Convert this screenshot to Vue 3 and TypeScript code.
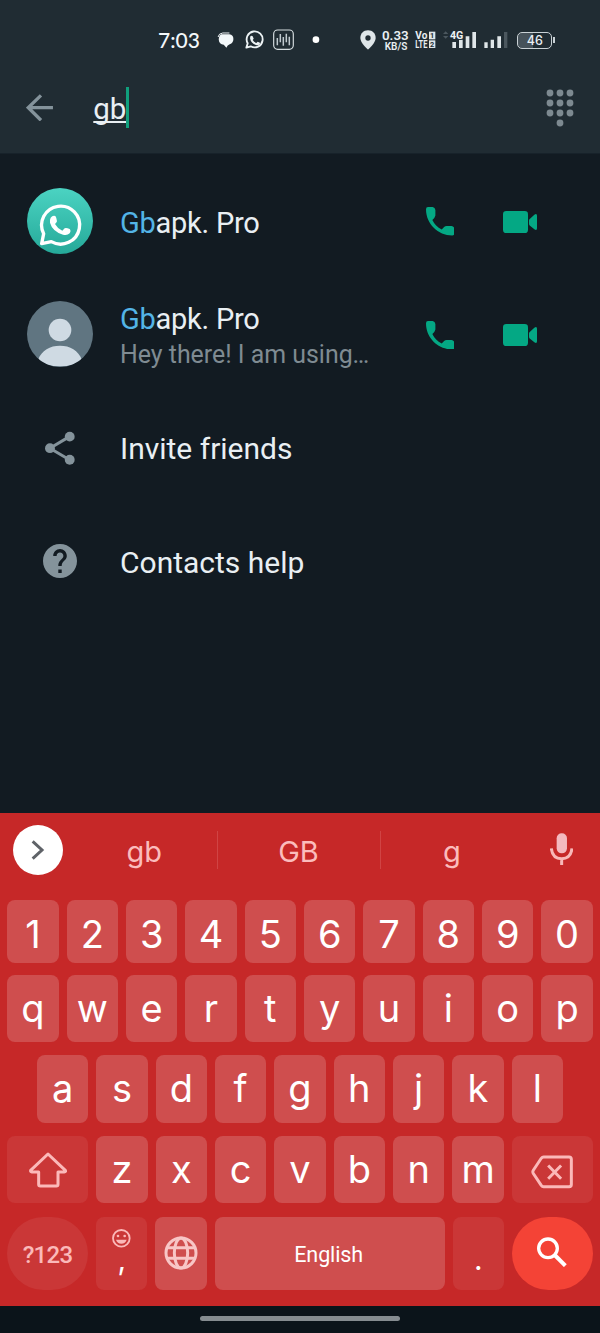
<script setup lang="ts">
interface Contact {
  match: string
  rest: string
  about?: string
  photo: boolean
}

const contacts: Contact[] = [
  { match: 'Gb', rest: 'apk. Pro', photo: true },
  { match: 'Gb', rest: 'apk. Pro', about: 'Hey there! I am using…', photo: false },
]
const digits: string[] = [...'1234567890']
const topRow: string[] = [...'qwertyuiop']
const homeRow: string[] = [...'asdfghjkl']
const bottomRow: string[] = [...'zxcvbnm']
const dialDots: [number, number][] = [
  [4, 4], [14, 4], [24, 4],
  [4, 14], [14, 14], [24, 14],
  [4, 24], [14, 24], [24, 24],
  [14, 34],
]
</script>

<template>
  <div class="screen">
    <header class="top">
      <div class="status">
        <span class="clock">7:03</span>
        <svg class="notices" viewBox="195 25 320 70">
          <path d="M214 44H238Q250 46 250 58Q250 70 239 74Q232 76 229 84L221 75Q207 73 206 60Q206 48 214 44Z" fill="#f3f8fa" />
          <path d="M204 52Q206 41 218 40H238" stroke="#f3f8fa" stroke-width="3" fill="none" />
          <path d="M289 84L293 71A24 24 0 1 1 302 80Z" fill="none" stroke="#edf3f5" stroke-width="5.5" stroke-linejoin="round" />
          <path d="M301 50Q304 46 308 50L311 57L308 61Q312 68 319 70L323 66L331 70Q329 78 320 77Q303 73 300 56Z" fill="#edf3f5" />
          <rect x="371" y="31" width="59" height="58" rx="12" fill="none" stroke="#d5dde0" stroke-width="3.500" />
          <path d="M382 55V77M391 43V68M400 52V78M409 42V68M418 51V77" stroke="#c0cacf" stroke-width="4.500" />
          <circle cx="498" cy="60" r="10" fill="#fff" />
        </svg>
        <svg class="pin" viewBox="0 0 48 60">
          <path d="M24 1C10 1 1 11 1 24C1 39 24 59 24 59S47 39 47 24C47 11 38 1 24 1Z" fill="#dfe6e9" />
          <circle cx="24" cy="24" r="8" fill="#212d34" />
        </svg>
        <svg class="rate" viewBox="98 15 162 90">
          <g fill="#e9eff2" font-weight="700">
            <text x="98" y="60" font-size="38" font-weight="600" textLength="80" lengthAdjust="spacingAndGlyphs">0.33</text>
            <text x="106" y="91" font-size="31" font-weight="600" textLength="68" lengthAdjust="spacingAndGlyphs">KB/S</text>
            <text x="198" y="58" font-size="30" textLength="36" lengthAdjust="spacingAndGlyphs">Vo</text>
            <text x="198" y="84" font-size="30" textLength="36" lengthAdjust="spacingAndGlyphs">LTE</text>
          </g>
          <rect x="239" y="35" width="19" height="23" fill="#dfe6e9" />
          <rect x="239" y="61" width="19" height="23" fill="#dfe6e9" />
          <g fill="#202c33" font-weight="700" font-size="22" text-anchor="middle">
            <text x="248" y="55">1</text>
            <text x="248" y="81">2</text>
          </g>
        </svg>
        <svg class="signal" viewBox="278 30 200 60">
          <path d="M281 42L289 34L297 42ZM281 48L289 56L297 48Z" fill="#4b575e" />
          <path d="M309 66H320V84H309ZM329 59H340V84H329ZM349 49H360V84H349ZM369 36H380V84H369Z" fill="#dfe6e9" />
          <path d="M405 67H415V84H405ZM424 59H434V84H424ZM444 49H455V84H444Z" fill="#dfe6e9" />
          <path d="M464 36H474V84H464Z" fill="#4b575e" />
          <text x="302" y="56" font-size="31" textLength="40" lengthAdjust="spacingAndGlyphs" stroke="#212d34" stroke-width="5" paint-order="stroke" fill="#eef3f5">4G</text>
        </svg>
        <span class="battery">46</span>
      </div>
      <div class="search">
        <svg class="back" viewBox="78 72 82 82">
          <path d="M159 113H86M123 76L85 113L123 151" fill="none" stroke="#84939b" stroke-width="10" />
        </svg>
        <div class="query"><u>gb</u><span class="caret"></span></div>
        <svg class="dial" viewBox="0 0 28 38">
          <circle v-for="([x, y], i) in dialDots" :key="i" :cx="x" :cy="y" r="3.4" fill="#7d8a91" />
        </svg>
      </div>
    </header>

    <main class="list">
      <div v-for="(c, i) in contacts" :key="i" class="row">
        <svg v-if="c.photo" class="avatar" viewBox="81 54 198 198">
          <defs>
            <linearGradient id="teal" x1="0" y1="0" x2="0" y2="1">
              <stop offset="0" stop-color="#4bd3c2" />
              <stop offset="1" stop-color="#25a999" />
            </linearGradient>
          </defs>
          <circle cx="180" cy="153" r="99" fill="url(#teal)" />
          <path d="M125 221L131 191A57 57 0 1 1 154 215Z" fill="none" stroke="#fff" stroke-width="10" stroke-linejoin="round" />
          <path d="M152 143Q158 135 166 138Q169 141 171 154Q169 159 165 162Q172 175 187 182L194 175Q199 173 209 177Q214 182 209 190Q202 197 189 194Q157 184 150 158Q149 149 152 143Z" fill="#fff" />
        </svg>
        <svg v-else class="avatar" viewBox="81 393 198 198">
          <defs><clipPath id="round"><circle cx="180" cy="492" r="99" /></clipPath></defs>
          <g clip-path="url(#round)">
            <rect x="81" y="393" width="198" height="198" fill="#607581" />
            <circle cx="180" cy="480" r="34" fill="#cfdae3" />
            <path d="M114 570C125 540 150 527 180 527S235 540 246 570Q215 590 180 589Q145 590 114 570Z" fill="#cfdae3" />
          </g>
        </svg>
        <div class="info">
          <div class="name"><span class="hit">{{ c.match }}</span>{{ c.rest }}</div>
          <div v-if="c.about" class="about">{{ c.about }}</div>
        </div>
        <svg class="call" viewBox="0 0 85 85">
          <path d="M6 0H20Q27 1 28 9V25Q27 31 19 39C25 51 34 61 47 67L54 60Q58 56 64 57H76Q84 58 85 65V79Q84 85 78 85C36 85 0 51 0 7Q0 0 6 0Z" fill="#04a884" />
        </svg>
        <svg class="video" viewBox="609 123 102 66">
          <rect x="609" y="123" width="75" height="66" rx="10" fill="#04a884" />
          <path d="M687 151Q687 148 690 146L703 134Q711 129 711 137V175Q711 183 703 178L690 167Q687 165 687 161Z" fill="#04a884" />
        </svg>
      </div>
      <div class="row">
        <span class="glyph">
          <svg width="30" height="34" viewBox="135 62 91 101">
            <path d="M209 78L150 113L209 148" fill="none" stroke="#84939b" stroke-width="9" />
            <g fill="#84939b"><circle cx="210" cy="78" r="15" /><circle cx="150" cy="113" r="15" /><circle cx="210" cy="148" r="15" /></g>
          </svg>
        </span>
        <div class="name action">Invite friends</div>
      </div>
      <div class="row">
        <span class="glyph">
          <svg width="34" height="34" viewBox="2 2 20 20">
            <path d="M12 2C6.48 2 2 6.48 2 12s4.48 10 10 10 10-4.48 10-10S17.520 2 12 2zm1 17h-2v-2h2v2zm2.070-7.750l-.9.920C13.450 12.900 13 13.500 13 15h-2v-.5c0-1.100.45-2.100 1.170-2.830l1.240-1.260c.37-.36.59-.86.59-1.410 0-1.100-.9-2-2-2s-2 .9-2 2H8c0-2.210 1.790-4 4-4s4 1.790 4 4c0 .88-.36 1.680-.93 2.250z" fill="#84939b" />
          </svg>
        </span>
        <div class="name action">Contacts help</div>
      </div>
    </main>

    <section class="keyboard">
      <div class="suggestions">
        <span class="expand">
          <svg width="14" height="20" viewBox="96 119 42 60"><path d="M101 123L129 149L101 175" fill="none" stroke="#5f6368" stroke-width="9" /></svg>
        </span>
        <span class="word first">gb</span>
        <span class="word middle">GB</span>
        <span class="word last">g</span>
        <svg class="mic" viewBox="750 98 70 98">
          <rect x="770" y="99" width="31" height="60" rx="15" fill="#f4b9bf" />
          <path d="M754 144Q757 175 785 175T816 144M785 175V195" fill="none" stroke="#f8b8b8" stroke-width="9" />
        </svg>
      </div>
      <div class="keys digits"><span v-for="k in digits" :key="k" class="key">{{ k }}</span></div>
      <div class="keys letters"><span v-for="k in topRow" :key="k" class="key">{{ k }}</span></div>
      <div class="keys letters home"><span v-for="k in homeRow" :key="k" class="key">{{ k }}</span></div>
      <div class="keys letters">
        <span class="key wide dim">
          <svg width="38" height="36" viewBox="86 335 114 108"><path d="M143 341L91 390Q90 395 94 395H115V432Q115 437 120 437H168Q173 437 173 432V395H192Q197 395 195 390Z" fill="none" stroke="#fbb9b9" stroke-width="9" stroke-linejoin="round" /></svg>
        </span>
        <span v-for="k in bottomRow" :key="k" class="key">{{ k }}</span>
        <span class="key wide dim erase">
          <svg width="42" height="34" viewBox="690 344 127 101">
            <path d="M728 349H805Q812 349 812 356V432Q812 439 805 439H728Q724 439 721 435L697 399Q694 394 697 389L721 353Q724 349 728 349Z" fill="none" stroke="#fbb9b9" stroke-width="9" />
            <path d="M742 375L781 415M781 375L742 415" stroke="#fbb9b9" stroke-width="9" />
          </svg>
        </span>
      </div>
      <div class="keys last-row">
        <span class="key wide dim pill symbols">?123</span>
        <span class="key dim comma">
          <svg width="19" height="19" viewBox="336 569 57 57">
            <circle cx="364" cy="597" r="25" fill="none" stroke="#fbb9b9" stroke-width="5.500" />
            <circle cx="354" cy="590" r="4" fill="#fbb9b9" /><circle cx="374" cy="590" r="4" fill="#fbb9b9" />
            <path d="M348 601H380Q376 613 364 613T348 601Z" fill="#fbb9b9" />
          </svg>
          <span>,</span>
        </span>
        <span class="key">
          <svg width="34" height="34" viewBox="491 588 102 102">
            <g fill="none" stroke="#f8c6c6" stroke-width="9">
              <circle cx="542" cy="639" r="45" /><ellipse cx="542" cy="639" rx="20" ry="45" />
              <path d="M499 623H585M499 655H585" />
            </g>
          </svg>
        </span>
        <span class="key space">English</span>
        <span class="key dim dot">.</span>
        <span class="key wide pill go">
          <svg width="30" height="30" viewBox="709 592 90 90"><circle cx="742" cy="626" r="28" fill="none" stroke="#fff" stroke-width="10" /><path d="M762 646L794 678" stroke="#fff" stroke-width="12" /></svg>
        </span>
      </div>
    </section>

    <footer class="nav"><span></span></footer>
  </div>
</template>

<style>
body {
  background: #121b22;
}
</style>

<style scoped>
.screen {
  display: flex;
  flex-direction: column;
  width: 600px;
  height: 1333px;
  overflow: hidden;
  background: #121b22;
  color: #e9eff3;
  font-family: Roboto, "Liberation Sans", sans-serif;
}
svg {
  display: block;
  flex: none;
}
.top {
  box-sizing: border-box;
  height: 154px;
  background: #202c33;
  border-bottom: 1px solid #17222a;
}
.status {
  display: flex;
  align-items: center;
  height: 80px;
}
.clock {
  width: 41px;
  margin-left: 158px;
  font: 500 21px/24px Lato, sans-serif;
  white-space: nowrap;
  color: #f3f8fa;
}
.notices {
  width: 106.7px;
  height: 23.3px;
  margin-left: 16px;
}
.pin {
  width: 16px;
  height: 20px;
  margin-left: 38px;
}
.rate {
  width: 54px;
  height: 30px;
  margin-left: 6.500px;
  font-family: Roboto, sans-serif;
}
.signal {
  width: 66.700px;
  height: 20px;
  margin-left: 6px;
  font-family: Roboto, sans-serif;
  font-weight: 700;
}
.battery {
  box-sizing: border-box;
  position: relative;
  width: 35px;
  height: 17px;
  margin-left: 8.500px;
  border: 1.500px solid #c9d1d5;
  border-radius: 5px;
  background: linear-gradient(90deg, #46525a 46%, transparent 46%);
  background-clip: padding-box;
  font: 500 12.500px/15px Inter, sans-serif;
  text-align: center;
}
.battery::after {
  content: "";
  position: absolute;
  right: -4px;
  top: 4px;
  width: 2px;
  height: 6px;
  background: #c9d1d5;
}
.search {
  display: flex;
  align-items: flex-start;
}
.back {
  width: 27.300px;
  height: 27.300px;
  margin: 14px 0 0 26px;
}
.query {
  display: flex;
  flex: 1;
  margin: 7px 0 0 40px;
  font-size: 29.500px;
  line-height: 45px;
}
.query u {
  text-decoration-thickness: 1.500px;
  text-underline-offset: 2px;
  text-decoration-skip-ink: none;
}
.caret {
  width: 3px;
  height: 41px;
  background: #10a07d;
}
.dial {
  width: 28px;
  height: 38px;
  margin: 8.500px 26px 0 0;
}
.list {
  flex: 1;
  padding-top: 10.500px;
}
.row {
  display: flex;
  align-items: center;
  height: 113.300px;
  padding-left: 27px;
}
.avatar {
  width: 66px;
  height: 66px;
}
.info {
  width: 305.500px;
  margin-left: 27px;
  padding-top: 4px;
}
.name {
  font-size: 29px;
  line-height: 36px;
  letter-spacing: -0.250px;
  white-space: nowrap;
}
.hit {
  color: #53b4e6;
}
.about {
  font-size: 24.900px;
  line-height: 35px;
  color: #7f8b92;
}
.call {
  width: 28.500px;
  height: 28.500px;
  margin-top: 1px;
}
.video {
  width: 34px;
  height: 22px;
  margin-top: 1px;
  margin-left: 49px;
}
.glyph {
  display: flex;
  justify-content: center;
  width: 66px;
}
.action {
  margin-left: 27px;
  padding-top: 3px;
  font-size: 30px;
  letter-spacing: 0;
}
.keyboard {
  height: 493px;
  background: #c62828;
}
.suggestions {
  display: flex;
  align-items: center;
  height: 74px;
  padding: 0 26px 0 13px;
}
.expand {
  display: flex;
  align-items: center;
  justify-content: center;
  width: 50px;
  height: 50px;
  border-radius: 50%;
  background: #fff;
}
.word {
  box-sizing: border-box;
  height: 38px;
  font: 29px/42px Inter, sans-serif;
  text-align: center;
  color: #fbbcbc;
}
.first {
  width: 154.500px;
  padding-left: 9px;
  border-right: 1px solid #d04444;
}
.middle {
  width: 163px;
  border-right: 1px solid #d04444;
}
.last {
  width: 143px;
}
.mic {
  width: 23.300px;
  height: 32.700px;
  margin: -2px 0 0 26px;
}
.keys {
  display: flex;
  justify-content: center;
  gap: 8px;
  padding: 0 7px;
}
.key {
  box-sizing: border-box;
  display: flex;
  align-items: center;
  justify-content: center;
  width: 51.350px;
  border-radius: 8px;
  background: #cf4e4e;
  color: #fff;
  font: 38px/48px Inter, sans-serif;
}
.digits {
  height: 63px;
  margin-top: 13px;
}
.digits .key {
  padding-top: 4px;
}
.letters {
  height: 67.300px;
  margin-top: 12px;
}
.letters + .letters {
  margin-top: 13.200px;
}
.letters .key {
  padding-bottom: 2px;
}
.wide {
  width: 81.100px;
}
.letters .dim {
  padding-bottom: 0;
}
.dim {
  background: #ca3737;
}
.letters .erase {
  padding-top: 4px;
}
.last-row {
  height: 73px;
  margin-top: 13.500px;
}
.pill {
  border-radius: 37px;
}
.symbols {
  padding-top: 3px;
  font: 500 24px/30px Roboto, sans-serif;
  letter-spacing: -0.700px;
  color: #fbb9b9;
}
.comma {
  flex-direction: column;
  justify-content: flex-start;
  padding-top: 12px;
}
.comma span {
  font-size: 30px;
  line-height: 22px;
}
.space {
  flex: 1;
  font: 21.500px/30px Roboto, sans-serif;
  letter-spacing: -0.100px;
  padding: 3px 2px 0 0;
}
.dot {
  padding-top: 12px;
  font-size: 30px;
}
.go {
  background: #f44336;
}
.go svg {
  margin-top: -3px;
}
.nav {
  display: flex;
  justify-content: center;
  height: 27px;
  background: #0b141a;
}
.nav span {
  width: 200px;
  height: 5px;
  margin-top: 10px;
  border-radius: 3px;
  background: #858c90;
}
</style>
